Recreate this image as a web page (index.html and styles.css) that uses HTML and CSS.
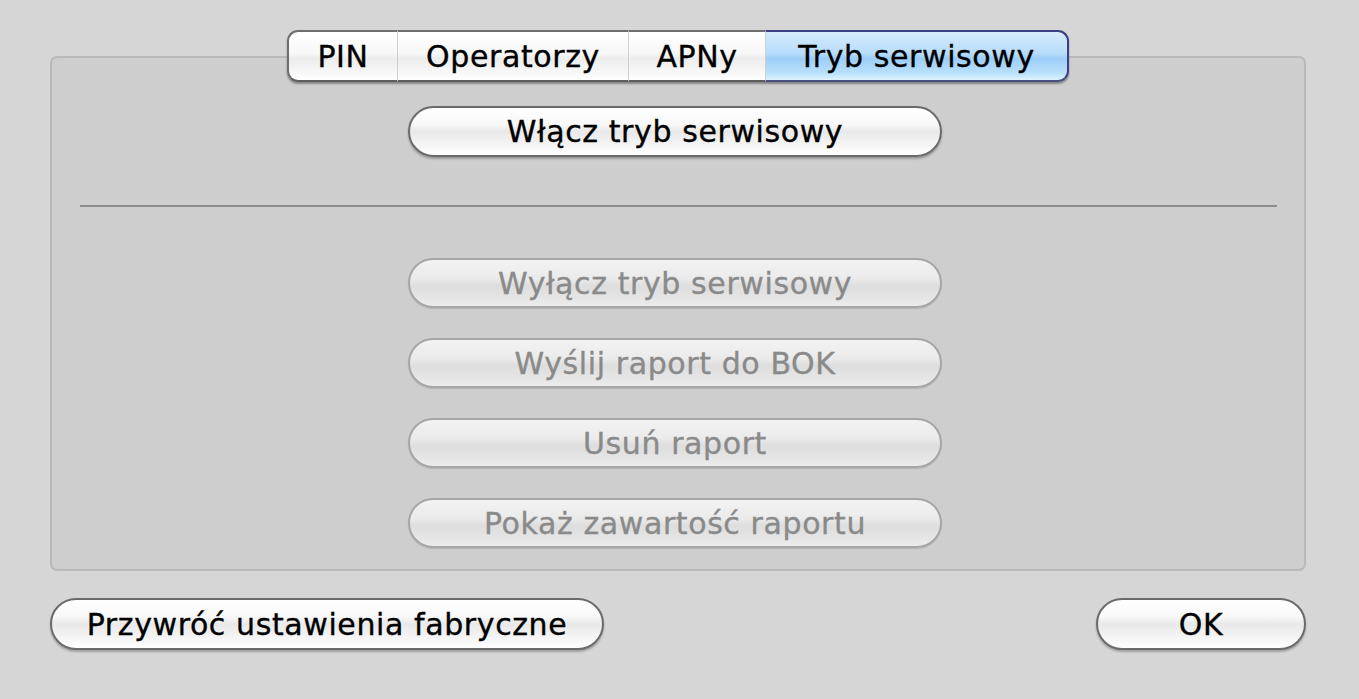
FILE: index.html
```html
<!DOCTYPE html>
<html lang="pl">
<head>
<meta charset="utf-8">
<title>Tryb serwisowy</title>
<link rel="stylesheet" href="styles.css">
</head>
<body>
<div class="window">
  <div class="tabbox">
    <div class="tabs">
      <div class="tab tab-first">PIN</div>
      <div class="tab">Operatorzy</div>
      <div class="tab">APNy</div>
      <div class="tab tab-last tab-active">Tryb serwisowy</div>
    </div>
    <button class="btn btn-wide btn-enable">Włącz tryb serwisowy</button>
    <div class="separator"></div>
    <div class="disabled-group">
      <button class="btn btn-wide" disabled>Wyłącz tryb serwisowy</button>
      <button class="btn btn-wide" disabled>Wyślij raport do BOK</button>
      <button class="btn btn-wide" disabled>Usuń raport</button>
      <button class="btn btn-wide" disabled>Pokaż zawartość raportu</button>
    </div>
  </div>
  <div class="footer">
    <button class="btn btn-reset">Przywróć ustawienia fabryczne</button>
    <button class="btn btn-ok">OK</button>
  </div>
</div>
</body>
</html>
```

FILE: styles.css
```css
html, body {
  margin: 0;
  padding: 0;
  background: #d6d6d6;
  font-family: "DejaVu Sans", "Liberation Sans", sans-serif;
}

.window {
  width: 1359px;
  height: 699px;
  box-sizing: border-box;
  padding: 56px 53px 0 50px;
}

.tabbox {
  height: 515px;
  box-sizing: border-box;
  border: 2px solid #b9b9b9;
  border-radius: 7px;
  background: #cecece;
  display: flex;
  flex-direction: column;
  align-items: center;
}

.tabs {
  display: flex;
  margin-top: -28px;
  height: 52px;
  box-sizing: border-box;
  border-radius: 11px;
  box-shadow: 0 2px 2px rgba(0,0,0,0.35);
}

.tab {
  height: 52px;
  box-sizing: border-box;
  display: flex;
  align-items: center;
  justify-content: center;
  font-size: 30px;
  letter-spacing: 0.6px;
  -webkit-text-stroke: 0.35px #000;
  color: #000;
  background: linear-gradient(#ffffff 0%, #f7f7f7 45%, #ececec 55%, #f8f8f8 85%, #ffffff 100%);
  border-top: 2px solid #6e6e6e;
  border-bottom: 2px solid #5e5e5e;
  border-right: 1px solid #cfcfcf;
  padding: 0;
}

.tab:nth-child(1) { width: 111px; }
.tab:nth-child(2) { width: 231px; }
.tab:nth-child(3) { width: 137px; }
.tab:nth-child(4) { width: 303px; }

.tab-first {
  border-left: 2px solid #6e6e6e;
  border-radius: 11px 0 0 11px;
}

.tab-last {
  border-right: 2px solid #3b3f86;
  border-radius: 0 11px 11px 0;
}

.tab-active {
  background: linear-gradient(#d6ebfc 0%, #b7dcfb 45%, #9ccdf8 55%, #b9e0fb 85%, #dff2fe 100%);
  border-top-color: #3b3f86;
  border-bottom-color: #4a4f7c;
}

.btn {
  font-family: "DejaVu Sans", "Liberation Sans", sans-serif;
  font-size: 30px;
  letter-spacing: 0.6px;
  -webkit-text-stroke: 0.35px currentColor;
  color: #000;
  height: 51px;
  box-sizing: border-box;
  border: 2px solid #6a6a6a;
  border-radius: 26px;
  background: linear-gradient(#ffffff 0%, #f8f8f8 35%, #e9e9e9 50%, #f1f1f1 70%, #ffffff 100%);
  box-shadow: 0 2px 2px rgba(0,0,0,0.25);
  padding: 0;
  display: flex;
  align-items: center;
  justify-content: center;
}

.btn-wide {
  width: 534px;
  margin-left: -6px;
}

.btn-enable {
  margin-top: 24px;
}

.separator {
  align-self: stretch;
  margin: 48px 27px 0 28px;
  height: 2px;
  background: #8c8c8c;
}

.disabled-group {
  margin-top: 51px;
  display: flex;
  flex-direction: column;
  gap: 30px;
}

.btn[disabled] {
  height: 50px;
  color: #8a8a8a;
  border-color: #a6a6a6;
  background: linear-gradient(#f2f2f2 0%, #ebebeb 40%, #dedede 55%, #e3e3e3 75%, #ececec 100%);
  box-shadow: 0 1px 1px rgba(0,0,0,0.12);
}

.footer {
  display: flex;
  justify-content: space-between;
  margin-top: 27px;
}

.btn-reset {
  width: 554px;
  height: 52px;
}

.btn-ok {
  width: 210px;
  height: 52px;
}
```
